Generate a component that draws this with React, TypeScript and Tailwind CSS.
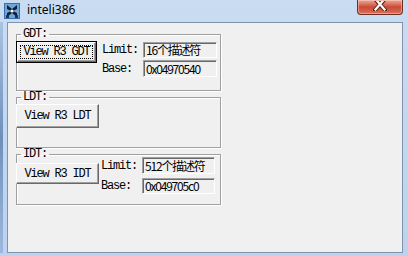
import React from 'react';

const mono = 'font-mono text-[12px] tracking-[-1.2px] text-black';
const cjk = "font-['Noto_Sans_CJK_SC'] text-[12px] leading-[14px] text-black";

function AppIcon() {
  return (
    <svg width="16" height="16" viewBox="0 0 16 16">
      <rect x="0" y="0" width="16" height="16" fill="#3d6fb0" />
      <rect x="1" y="1" width="14" height="14" fill="#6fa6d8" />
      <path d="M3 2 L8 6 L13 2 L13 6 L9 8 L13 10 L13 14 L8 10 L3 14 L3 10 L7 8 L3 6 Z" fill="#0f1f3a" />
      <circle cx="8" cy="8" r="1.6" fill="#ffffff" />
      <rect x="2" y="12" width="3" height="3" fill="#1d3358" />
      <rect x="11" y="12" width="3" height="3" fill="#1d3358" />
    </svg>
  );
}

function Button({ label, isDefault, className }: { label: string; isDefault?: boolean; className: string }) {
  if (isDefault) {
    return (
      <div className={`${className} border border-black bg-[#f0f0f0] p-0`}>
        <div className="h-full w-full border border-t-white border-l-white border-r-[#696969] border-b-[#696969] shadow-[inset_-1px_-1px_0_#a0a0a0] p-[2px]">
          <div className={`${mono} h-full w-full border border-dotted border-black flex items-center justify-center leading-[12px]`}>
            {label}
          </div>
        </div>
      </div>
    );
  }
  return (
    <div
      className={`${className} ${mono} bg-[#f0f0f0] border border-t-white border-l-white border-r-[#696969] border-b-[#696969] shadow-[inset_-1px_-1px_0_#a0a0a0] flex items-center justify-center leading-[12px]`}
    >
      {label}
    </div>
  );
}

function Edit({ value, className }: { value: string; className: string }) {
  return (
    <div
      className={`${className} ${cjk} bg-[#f0f0f0] border border-t-[#a0a0a0] border-l-[#a0a0a0] border-r-white border-b-white shadow-[inset_1px_1px_0_#696969] pl-[2px] flex items-center whitespace-nowrap overflow-hidden`}
    >
      {value}
    </div>
  );
}

function Group({ title, className, children }: { title: string; className: string; children: React.ReactNode }) {
  return (
    <fieldset
      className={`${className} w-[205px] border border-[#a0a0a0] shadow-[inset_1px_1px_0_#fff,1px_1px_0_#fff] p-0 m-0 min-w-0`}
    >
      <legend className={`${mono} ml-[4px] px-[2px] leading-[10px]`}>{title}</legend>
      {children}
    </fieldset>
  );
}

export default function App() {
  return (
    <div className="w-[408px] h-[256px] flex flex-col bg-gradient-to-b from-[#c9dcf2] to-[#bcd2ee] overflow-hidden">
      {/* Title bar */}
      <div className="h-[22px] flex items-start shrink-0">
        <div className="ml-[4px] mt-[3px]">
          <AppIcon />
        </div>
        <span className="ml-[7px] mt-[2px] font-['Noto_Sans'] text-[12px] leading-[16px] text-black">
          inteli386
        </span>
        <div className="flex-1" />
        <div className="mr-[5px] w-[46px] h-[15px] rounded-b-[4px] border border-t-0 border-[#6b2d24] bg-gradient-to-b from-[#e9a99a] via-[#c94a35] to-[#d9705a] shadow-[inset_0_0_0_1px_rgba(255,210,200,0.5)] flex items-start justify-center">
          <svg width="14" height="10" viewBox="0 0 14 10" className="mt-[1px]">
            <path d="M2 -2 L12 9 M12 -2 L2 9" stroke="#5a1f18" strokeWidth="4" strokeLinecap="square" />
            <path d="M2.5 -2 L11.5 8.5 M11.5 -2 L2.5 8.5" stroke="#ffffff" strokeWidth="2.2" strokeLinecap="square" />
          </svg>
        </div>
      </div>

      {/* Frame + client */}
      <div className="flex-1 flex pb-[3px] pr-[5px]">
        <div className="w-[3px] bg-gradient-to-b from-[#a9c3e3] via-[#6f8fbb] to-[#9db8dc]" />
        <div className="w-[4px]" />
        <div className="flex-1 bg-[#f0f0f0] border border-[#7f93ad] pl-[8px] pt-[6px] flex flex-col">
          <Group title="GDT:" className="h-[62px]">
            <div className="flex items-start">
              <Button label="View R3 GDT" isDefault className="-ml-[1px] mt-[2px] w-[81px] h-[22px]" />
              <div className={`ml-[5px] mt-[3px] grid grid-cols-[41px_74px] gap-y-[2px] items-center ${mono} leading-[12px]`}>
                <span>Limit:</span>
                <Edit value="16个描述符" className="h-[16px]" />
                <span>Base:</span>
                <Edit value="0x04970540" className="h-[17px]" />
              </div>
            </div>
          </Group>

          <Group title="LDT:" className="mt-[1px] h-[56px]">
            <Button label="View R3 LDT" className="-ml-[1px] mt-[2px] w-[83px] h-[24px]" />
          </Group>

          <Group title="IDT:" className="mt-[1px] h-[56px]">
            <div className="flex items-start">
              <Button label="View R3 IDT" className="-ml-[1px] mt-[4px] w-[83px] h-[21px]" />
              <div className={`ml-[2px] -mt-[2px] grid grid-cols-[41px_73px] gap-y-[4px] items-center ${mono} leading-[12px]`}>
                <span>Limit:</span>
                <Edit value="512个描述符" className="h-[17px]" />
                <span>Base:</span>
                <Edit value="0x049705c0" className="h-[16px]" />
              </div>
            </div>
          </Group>
        </div>
      </div>
    </div>
  );
}
